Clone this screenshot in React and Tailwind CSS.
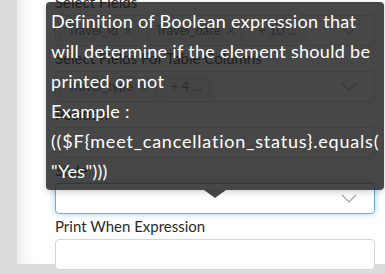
import React from 'react';

const font = { fontFamily: 'Lato, "Open Sans", sans-serif' };

function Chevron() {
  return (
    <svg width="16" height="9" viewBox="0 0 16 9" className="shrink-0">
      <polyline points="1,1 8,8 15,1" fill="none" stroke="#a0a0a0" strokeWidth="1.2" />
    </svg>
  );
}

function Chip({ label, close }) {
  return (
    <span className="flex h-[22px] items-center gap-[6px] rounded-[3px] border border-[#e3e3e3] bg-[#f2f2f2] px-[8px] text-[13px] text-[#666]">
      {label}
      {close && <span className="text-[15px] leading-none text-[#888]">×</span>}
    </span>
  );
}

function Field({ label, children, focused, select }) {
  return (
    <div className="flex flex-col">
      <div className="mt-[2px] h-[20px] text-[15px] leading-[20px] text-[#2a2a2a]">{label}</div>
      <div
        className={
          'mt-[3px] flex h-[31px] items-center gap-[5px] rounded-[4px] border bg-white pl-[3px] pr-[17px] ' +
          (focused
            ? 'border-[#66afe9] shadow-[0_0_6px_rgba(102,175,233,0.6)]'
            : 'border-[#d4d4d4]')
        }
      >
        <div className="flex flex-1 items-center gap-[5px]">{children}</div>
        {select && <Chevron />}
      </div>
    </div>
  );
}

export default function App() {
  return (
    <div className="relative h-[274px] w-[385px] overflow-hidden bg-[#dcdcdc]" style={font}>
      <div className="ml-[17px] h-full bg-white shadow-[inset_14px_0_18px_-12px_rgba(0,0,0,0.12)]">
        <div className="-mt-[10px] pl-[38px] pr-[10px]">
          <Field label="Select Fields" select>
            <Chip label="Travel_id" close />
            <Chip label="Travel_date" close />
            <Chip label="+ 10 ..." />
          </Field>
          <Field label="Select Fields For Table Columns" select>
            <Chip label="Travel_type" close />
            <Chip label="+ 4 ..." />
          </Field>
          <Field label="Position" select />
          <Field label="Style" select focused />
          <Field label="Print When Expression" />
        </div>
      </div>

      <div className="absolute left-[46px] top-[2px] w-[338px] rounded-[4px] bg-[rgba(30,30,30,0.82)] pb-[4px] pl-[5px] pt-[4px] text-[18px] leading-[30px] tracking-[0.3px] whitespace-nowrap text-white shadow-[0_2px_6px_rgba(0,0,0,0.2)]">
        <div>Definition of Boolean expression that</div>
        <div>will determine if the element should be</div>
        <div>printed or not</div>
        <div>Example :</div>
        <div className="tracking-[0.8px]">(($F{'{'}meet_cancellation_status{'}'}.equals(</div>
        <div>"Yes")))</div>
        <div className="absolute left-[158px] top-full h-0 w-0 border-x-[11px] border-t-[8px] border-x-transparent border-t-[rgba(30,30,30,0.82)]" />
      </div>
    </div>
  );
}
